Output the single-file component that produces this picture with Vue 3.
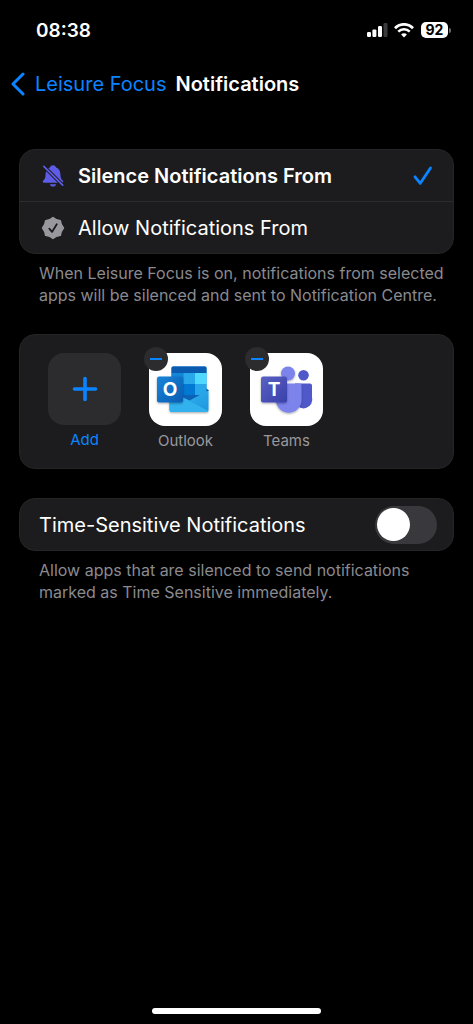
<script setup>
import { ref } from 'vue'

const mode = ref('silence')
const timeSensitive = ref(false)
</script>

<template>
  <div class="screen">
    <header class="status">
      <span class="time">08:38</span>
      <div class="indicators">
        <svg class="signal" width="20" height="14" viewBox="0 0 20 14" fill="#fff" aria-hidden="true">
          <rect x="0" y="9" width="4" height="5" rx="1.2" />
          <rect x="5.4" y="6.4" width="4" height="7.6" rx="1.2" />
          <rect x="11" y="3" width="4" height="11" rx="1.2" />
          <rect x="16.5" y="0" width="4" height="14" rx="1.2" fill="#3a3a3c" />
        </svg>
        <svg class="wifi" width="20" height="15" viewBox="0 0 20 15" fill="none" stroke="#fff" aria-hidden="true">
          <path d="M1 5.2C6 0 14 0 19 5.2" stroke-width="2.7" />
          <path d="M4.3 8.7c3.2-3.3 8.2-3.3 11.4 0" stroke-width="2.6" />
          <path d="M10 14.4 7.1 11.4c1.6-1.6 4.2-1.6 5.8 0z" fill="#fff" stroke="none" />
        </svg>
        <span class="battery"><span class="level">92</span><span class="tip"></span></span>
      </div>
    </header>

    <nav class="nav">
      <a class="back" href="#">
        <svg width="14" height="24" viewBox="0 0 14 24" fill="none" stroke="#0a84ff" stroke-width="3" stroke-linecap="round" stroke-linejoin="round" aria-hidden="true">
          <path d="M12 2 2 12l10 10" />
        </svg>
        <span>Leisure Focus</span>
      </a>
      <h1>Notifications</h1>
    </nav>

    <main>
      <section class="card">
        <label class="row option" :class="{ chosen: mode === 'silence' }">
          <input v-model="mode" type="radio" name="mode" value="silence" />
          <svg class="lead" width="24" height="24" viewBox="0 0 24 24" aria-hidden="true">
            <path d="M12 1.2c1.7 0 2.8 1 3.1 2.3 3 1.2 4.200 3.600 4.300 6.700.1 3.400.8 4.900 2.300 6.300 1 1 .6 2.300-.8 2.300H3.100c-1.400 0-1.800-1.300-.8-2.300 1.500-1.400 2.200-2.900 2.300-6.300.1-3.100 1.300-5.500 4.300-6.700C9.200 2.200 10.300 1.200 12 1.200z" fill="#5e5ce6" />
            <path d="M8.800 20.200h6.400c-.4 1.500-1.600 2.400-3.200 2.400s-2.800-.9-3.200-2.400z" fill="#5e5ce6" />
            <path d="M2 1.500 22.500 22" stroke="#1c1c1e" stroke-width="3.8" />
            <path d="M2.800 2.300 21.700 21.200" stroke="#5e5ce6" stroke-width="1.7" stroke-linecap="round" />
          </svg>
          <span class="text">Silence Notifications From</span>
          <svg v-if="mode === 'silence'" class="tick" width="20" height="20" viewBox="0 0 20 20" fill="none" stroke="#0a84ff" stroke-width="2.8" stroke-linecap="round" stroke-linejoin="round" aria-hidden="true">
            <path d="m2 10.800 5.300 6.500L17.500 2" />
          </svg>
        </label>
        <label class="row option" :class="{ chosen: mode === 'allow' }">
          <input v-model="mode" type="radio" name="mode" value="allow" />
          <svg class="lead" width="24" height="24" viewBox="0 0 24 24" aria-hidden="true">
            <path d="M12 1.700 15.400 3.900 19.200 4.800 20.100 8.600 22.300 12 20.100 15.400 19.200 19.200 15.400 20.100 12 22.300 8.600 20.100 4.800 19.200 3.900 15.400 1.700 12 3.900 8.600 4.800 4.800 8.600 3.900Z" fill="#98989d" stroke="#98989d" stroke-width="1.8" stroke-linejoin="round" />
            <path d="m8.300 12.700 2.700 3.200L15.800 8.300" fill="none" stroke="#1c1c1e" stroke-width="1.8" stroke-linecap="round" stroke-linejoin="round" />
          </svg>
          <span class="text">Allow Notifications From</span>
          <svg v-if="mode === 'allow'" class="tick" width="20" height="20" viewBox="0 0 20 20" fill="none" stroke="#0a84ff" stroke-width="2.8" stroke-linecap="round" stroke-linejoin="round" aria-hidden="true">
            <path d="m2 10.800 5.300 6.500L17.500 2" />
          </svg>
        </label>
      </section>
      <p class="note">When Leisure Focus is on, notifications from selected apps will be silenced and sent to Notification Centre.</p>

      <section class="card apps">
        <button class="app add" type="button">
          <span class="tile">
            <svg width="26" height="26" viewBox="0 0 26 26" stroke="#0a84ff" stroke-width="3.6" stroke-linecap="round" aria-hidden="true">
              <path d="M13 2.500v21M2.500 13h21" />
            </svg>
          </span>
          <span class="name">Add</span>
        </button>

        <div class="app">
          <div class="tile white">
            <svg width="73" height="73" viewBox="0 0 73 73" aria-hidden="true">
              <defs>
                <linearGradient id="ol-env" x1="0" y1="0" x2="1" y2="1">
                  <stop offset="0" stop-color="#35b8f1" />
                  <stop offset="1" stop-color="#1f94df" />
                </linearGradient>
                <linearGradient id="ol-box" x1="0" y1="0" x2="1" y2="1">
                  <stop offset="0" stop-color="#1784d9" />
                  <stop offset="1" stop-color="#0a5cb2" />
                </linearGradient>
                <filter id="soft" x="-30%" y="-30%" width="160%" height="160%">
                  <feDropShadow dx="0" dy="1" stdDeviation="1.2" flood-color="#000" flood-opacity=".35" />
                </filter>
              </defs>
              <path d="M57 35.500 60 37.200 57 40z" fill="#123b6d" />
              <rect x="22.500" y="13.500" width="35" height="34" rx="1.500" fill="#0078d4" />
              <path d="M24 13.500h32a1.500 1.500 0 0 1 1.500 1.500v5h-35v-5a1.500 1.500 0 0 1 1.500-1.500z" fill="#0a5bb0" />
              <path d="M22.500 20H34.500V31H22.500z" fill="#1486d8" />
              <path d="M34.500 20H46V31H34.500z" fill="#28a8ea" />
              <path d="M46 20H57.500V31H46z" fill="#50d9ff" />
              <path d="M34.500 31H46V42H34.500z" fill="#0078d4" />
              <path d="M46 31H57.500V42H46z" fill="#28a8ea" />
              <path d="M22.500 42H57.500V48H22.500z" fill="#0b62b7" />
              <g filter="url(#soft)">
                <path d="M59.500 37.200V57a2 2 0 0 1-2 2H22.500a2 2 0 0 1-2-2V38L40.500 47.500z" fill="url(#ol-env)" />
              </g>
              <path d="M20.500 37.500 59 57.800A2 2 0 0 1 57.500 59H22.500a2 2 0 0 1-2-2z" fill="#31b1ed" />
              <rect x="8" y="23.500" width="26" height="26" rx="2.200" fill="url(#ol-box)" filter="url(#soft)" />
              <text x="21" y="43" text-anchor="middle" class="letter">O</text>
            </svg>
          </div>
          <button class="remove" type="button" aria-label="Remove Outlook"><span></span></button>
          <span class="name">Outlook</span>
        </div>

        <div class="app">
          <div class="tile white">
            <svg width="73" height="73" viewBox="0 0 73 73" aria-hidden="true">
              <defs>
                <linearGradient id="tm-box" x1="0" y1="0" x2="1" y2="1">
                  <stop offset="0" stop-color="#5a62c3" />
                  <stop offset="1" stop-color="#3940ab" />
                </linearGradient>
              </defs>
              <circle cx="53.500" cy="22.300" r="5.300" fill="#5059c9" />
              <path d="M45 30.500h15a2 2 0 0 1 2 2v11.500a8.500 8.500 0 0 1-17 5z" fill="#5059c9" />
              <g filter="url(#soft)">
                <circle cx="38" cy="20.500" r="7" fill="#7b83eb" />
                <path d="M26 30.500h23.500a2 2 0 0 1 2 2v14.500a12.700 12.700 0 0 1-25.500 0z" fill="#7b83eb" />
              </g>
              <rect x="11" y="23.500" width="26" height="26" rx="2.200" fill="url(#tm-box)" filter="url(#soft)" />
              <text x="24" y="43" text-anchor="middle" class="letter">T</text>
            </svg>
          </div>
          <button class="remove" type="button" aria-label="Remove Teams"><span></span></button>
          <span class="name">Teams</span>
        </div>
      </section>

      <section class="card">
        <label class="row toggle">
          <span class="text">Time-Sensitive Notifications</span>
          <input v-model="timeSensitive" class="switch" type="checkbox" role="switch" />
        </label>
      </section>
      <p class="note">Allow apps that are silenced to send notifications marked as Time Sensitive immediately.</p>
    </main>

    <div class="home"></div>
  </div>
</template>

<style>
body {
  background: #000;
}
</style>

<style scoped>
.screen {
  box-sizing: border-box;
  min-height: 100vh;
  padding-bottom: 10px;
  display: flex;
  flex-direction: column;
  background: #000;
  color: #fff;
  font-family: Inter, "Liberation Sans", sans-serif;
  font-size: 20px;
}
.screen button,
.screen input {
  margin: 0;
  padding: 0;
  border: 0;
  font: inherit;
  appearance: none;
}
.status {
  height: 60px;
  padding: 0 22px 0 36px;
  display: flex;
  align-items: center;
  justify-content: space-between;
}
.time {
  font-size: 19px;
  font-weight: 600;
}
.indicators {
  display: flex;
  align-items: center;
  gap: 7px;
}
.signal {
  overflow: visible;
}
.battery {
  display: flex;
  align-items: center;
  gap: 1px;
}
.level {
  width: 27px;
  height: 16px;
  border-radius: 5px;
  background: #fff;
  color: #000;
  font-size: 14px;
  font-weight: 700;
  line-height: 16px;
  text-align: center;
}
.tip {
  width: 2px;
  height: 5px;
  border-radius: 0 2px 2px 0;
  background: #6c6c70;
}
.nav {
  height: 48px;
  padding: 0 11px;
  display: flex;
  align-items: center;
  gap: 9px;
}
.back {
  display: flex;
  align-items: center;
  gap: 10px;
  color: #0a84ff;
  text-decoration: none;
}
h1 {
  margin: 0;
  font-size: 20px;
  font-weight: 600;
}
main {
  padding: 41px 19px 0;
}
.card {
  box-sizing: border-box;
  border: 1px solid #252527;
  border-radius: 16px;
  background: #1c1c1e;
  overflow: hidden;
}
.row {
  height: 51px;
  padding: 0 20px 0 19px;
  display: flex;
  align-items: center;
}
.option + .option {
  border-top: 1px solid #2d2d2f;
}
.option input {
  position: absolute;
  opacity: 0;
}
.lead {
  margin: 0 13px 0 2px;
}
.text {
  flex: 1;
}
.chosen .text {
  font-weight: 600;
}
.note {
  margin: 0 0 28px;
  padding: 8px 8px 0 20px;
  color: #8a8a8f;
  font-size: 16px;
  line-height: 22px;
}
.apps {
  height: 135px;
  margin-bottom: 29px;
  padding: 18px 28px;
  display: flex;
  gap: 28px;
}
.app {
  position: relative;
  width: 73px;
  display: flex;
  flex-direction: column;
  align-items: center;
  gap: 5px;
  background: none;
}
.tile {
  width: 73px;
  height: 73px;
  display: flex;
  align-items: center;
  justify-content: center;
  border-radius: 16px;
  background: #2c2c2e;
}
.white {
  background: #fff;
}
.letter {
  fill: #fff;
  font-size: 19px;
  font-weight: 700;
}
.name {
  color: #98989d;
  font-size: 15px;
  line-height: 20px;
}
.add .name {
  color: #0a84ff;
}
.remove {
  position: absolute;
  top: -6px;
  left: -5px;
  width: 24px;
  height: 24px;
  display: flex;
  align-items: center;
  justify-content: center;
  border-radius: 50%;
  background: #2c2c2e;
}
.remove span {
  width: 12px;
  height: 2px;
  background: #0a84ff;
}
.toggle {
  padding-right: 16px;
}
.switch {
  width: 62px;
  height: 38px;
  display: flex;
  align-items: center;
  border-radius: 19px;
  background: #39393d;
}
.switch::before {
  content: "";
  width: 33px;
  height: 33px;
  margin-left: 2px;
  border-radius: 50%;
  background: #fff;
}
.switch:checked {
  background: #30d158;
}
.switch:checked::before {
  margin-left: 27px;
}
.home {
  width: 169px;
  height: 6px;
  margin: auto auto 0;
  border-radius: 3px;
  background: #fff;
}
</style>
